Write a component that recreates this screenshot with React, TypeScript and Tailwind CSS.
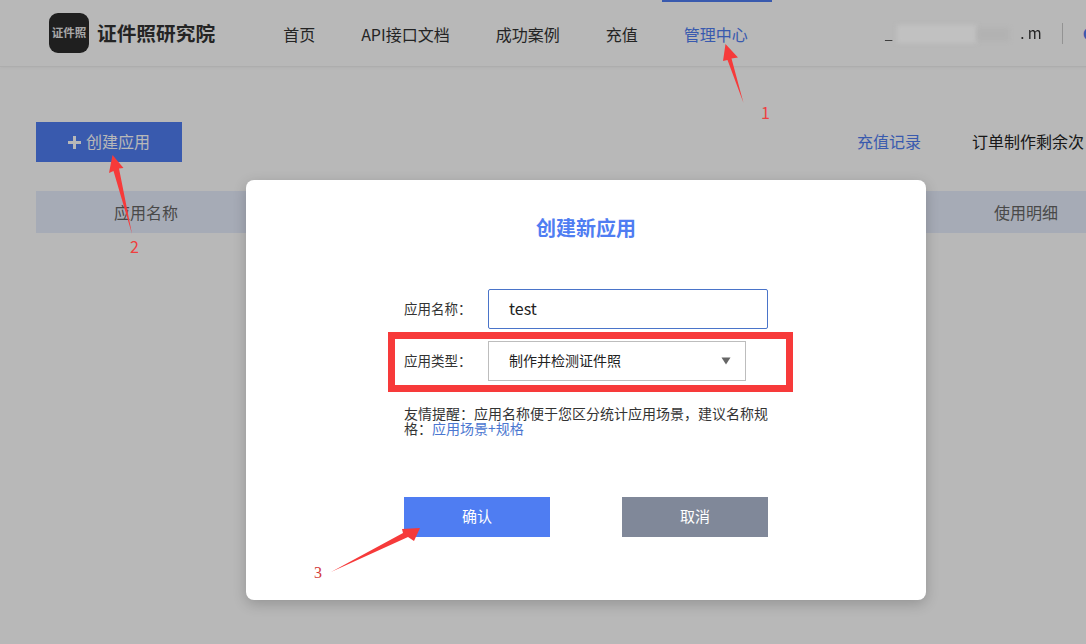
import React from "react";

const font = { fontFamily: '"Noto Sans CJK SC", "Noto Sans", sans-serif' };

function Nav({ children, active }: { children: React.ReactNode; active?: boolean }) {
  return (
    <a className={`text-[16px] leading-[24px] ${active ? "text-[#4f7df2]" : "text-[#333333]"}`}>{children}</a>
  );
}

function Annotations() {
  return (
    <div className="absolute inset-0 pointer-events-none">
      <svg className="absolute inset-0 w-[1086px] h-[644px]" viewBox="0 0 1086 644">
        <polygon points="725.5,44 738,57.5 731.5,58.5 743.5,103 727.5,60 723,61" fill="#f63a3a" />
        <polygon points="112.5,155 123.5,168 119,168.5 132,234 113.5,171 109,173" fill="#f63a3a" />
        <polygon points="420,528 414,541 408,537 331,572 403,533 402,529" fill="#f63a3a" />
      </svg>
      <span className="absolute left-[761px] top-[103px] text-[16px] leading-[18px] text-[#ee3f3f]">1</span>
      <span className="absolute left-[130px] top-[237px] text-[16px] leading-[18px] text-[#ee3f3f]">2</span>
      <span className="absolute left-[314px] top-[564px] text-[16px] leading-[18px] text-[#d23a3a]" style={{ fontFamily: '"Liberation Serif", serif' }}>3</span>
      <div className="absolute left-[897px] top-[25px] w-[80px] h-[18px] bg-[#c1c1c1] blur-[2px]" />
      <div className="absolute left-[977px] top-[28px] w-[32px] h-[13px] bg-[#b2b2b2] blur-[2px]" />
    </div>
  );
}

function Modal() {
  return (
    <div className="absolute left-[246px] top-[180px] w-[680px] h-[420px] bg-white rounded-[8px] shadow-[0_4px_14px_rgba(0,0,0,0.2)] flex flex-col items-center pt-[36px]">
      <h2 className="text-[20px] leading-[24px] font-bold text-[#4f7df2]">创建新应用</h2>
      <div className="w-[364px] mt-[49px] flex flex-col">
        <div className="flex items-center h-[40px]">
          <label className="w-[84px] text-[13.5px] leading-[18px] mt-[-2px] text-[#333333]">{"应用名称\uFF1A"}</label>
          <div className="w-[280px] h-[40px] border border-[#4a74c9] rounded-[2px] pl-[20px] pb-[2px] flex items-center text-[16px] text-[#222222]">test</div>
        </div>
        <div className="relative flex items-center h-[40px] mt-[12px]">
          <div className="absolute left-[-16px] top-[-9px] w-[405px] h-[60px] border-[7px] border-[#f73a3a]" />
          <label className="w-[84px] text-[13.5px] leading-[18px] mt-[-2px] text-[#333333]">{"应用类型\uFF1A"}</label>
          <div className="w-[258px] h-[40px] border border-[#bdbdbd] pl-[20px] pr-[14px] flex items-center justify-between text-[14px] text-[#222222]">
            <span className="mt-[-2px]">制作并检测证件照</span>
            <svg width="10" height="8" viewBox="0 0 10 8"><polygon points="0.5,0.5 9.5,0.5 5,7.5" fill="#666666" /></svg>
          </div>
        </div>
        <p className="mt-[25px] text-[14px] leading-[15px] text-[#333333]">
          {"友情提醒\uFF1A应用名称便于您区分统计应用场景\uFF0C建议名称规格\uFF1A"}
          <a className="text-[#4a76d0]">应用场景+规格</a>
        </p>
        <div className="flex justify-between mt-[61px]">
          <button className="w-[146px] h-[40px] pb-[2px] bg-[#4f7df2] text-white text-[15px]">确认</button>
          <button className="w-[146px] h-[40px] pb-[2px] bg-[#808899] text-white text-[15px]">取消</button>
        </div>
      </div>
    </div>
  );
}

export default function App() {
  return (
    <div className="relative w-[1086px] h-[644px] overflow-hidden bg-white" style={font}>
      <div className="w-[1172px]">
        <header className="relative h-[67px] border-b border-[#f0f0f0] flex items-center pl-[49px] shadow-[0_1px_3px_rgba(0,0,0,0.04)]">
          <div className="w-[40px] h-[40px] rounded-[9px] bg-[#2b2b2b] flex items-center justify-center text-[11.5px] font-bold text-[#e8e8e8] whitespace-nowrap">证件照</div>
          <div className="ml-[8px] text-[19.7px] font-bold text-[#333333] whitespace-nowrap">证件照研究院</div>
          <nav className="ml-[68px] flex items-center gap-[46px] mt-[1px]">
            <Nav>首页</Nav>
            <Nav>API接口文档</Nav>
            <Nav>成功案例</Nav>
            <Nav>充值</Nav>
            <Nav active>管理中心</Nav>
          </nav>
          <div className="absolute left-[662px] top-0 w-[110px] h-[2px] bg-[#4f7df2]" />
          <div className="ml-[137px] flex items-center">
            <div className="flex items-center w-[157px] h-[20px] justify-between">
              <span className="text-[#333333] text-[14px] blur-[0.5px]">_</span>
              <span className="text-[#333333] text-[15px] blur-[0.5px]">. m</span>
            </div>
            <div className="ml-[20px] w-px h-[21px] bg-[#cccccc]" />
            <span className="ml-[20px] text-[16px] font-bold text-[#4f7df2]">C</span>
          </div>
        </header>

        <div className="flex items-center h-[40px] mt-[55px] ml-[36px]">
          <button className="w-[146px] h-[40px] pb-[2px] bg-[#4f7df2] text-white text-[16px] flex items-center justify-center gap-[5px]">
            <svg className="mt-[2px]" width="13" height="13" viewBox="0 0 13 13"><path d="M5 0h3v5h5v3H8v5H5V8H0V5h5z" fill="#ffffff" /></svg>
            创建应用
          </button>
          <a className="ml-[675px] mt-[-2px] text-[16px] text-[#4f7df2]">充值记录</a>
          <span className="ml-[51px] mt-[-2px] text-[16px] text-[#222222] whitespace-nowrap">订单制作剩余次</span>
        </div>

        <div className="mt-[29px] ml-[36px] w-[1100px] h-[42px] bg-[#e7eefc] flex items-center justify-between text-[16px] text-[#666666] pl-[78px] pr-[78px]">
          <span>应用名称</span>
          <span>使用明细</span>
        </div>
      </div>

      <div className="absolute inset-0 bg-black/[0.28]" />
      <Modal />
      <Annotations />
    </div>
  );
}
